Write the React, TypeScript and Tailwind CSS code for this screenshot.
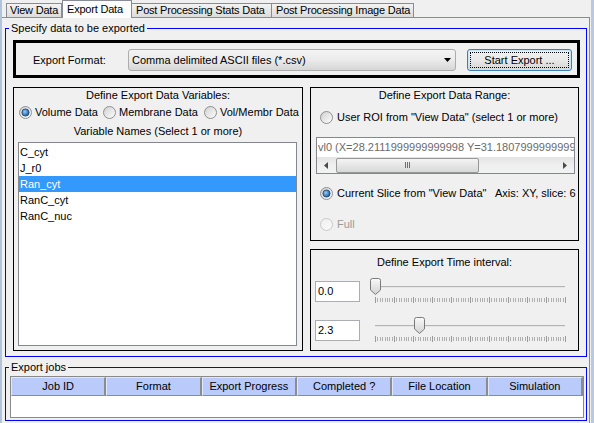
import React, { useId } from "react";

function Radio({ checked = false, disabled = false }: { checked?: boolean; disabled?: boolean }) {
  const id = useId().replace(/:/g, "");
  return (
    <svg width="13" height="13" viewBox="0 0 13 13" className="block shrink-0">
      <defs>
        <linearGradient id={`rf${id}`} x1="0" y1="0" x2="1" y2="1">
          <stop offset="0" stopColor={disabled ? "#eeeeee" : "#cfcfcf"} />
          <stop offset="1" stopColor={disabled ? "#fafafa" : "#ffffff"} />
        </linearGradient>
        <radialGradient id={`rd${id}`} cx="0.4" cy="0.4" r="0.6">
          <stop offset="0" stopColor="#8fd0ff" />
          <stop offset="1" stopColor="#1c5a9c" />
        </radialGradient>
      </defs>
      <circle cx="6.5" cy="6.5" r="6" fill={`url(#rf${id})`} stroke={disabled ? "#c8c8c8" : "#8e8f8f"} />
      {checked && <circle cx="6.5" cy="6.5" r="3.6" fill={`url(#rd${id})`} stroke="#23416a" strokeWidth="0.8" />}
    </svg>
  );
}

function Slider({ thumbX }: { thumbX: number }) {
  const id = useId().replace(/:/g, "");
  const ticks: React.ReactNode[] = [];
  for (let i = 0; i <= 80; i++) {
    const x = Math.round(10 + i * 2.375);
    const major = i % 8 === 0;
    ticks.push(
      <rect key={i} x={x} y={major ? 20 : 21} width={1} height={major ? 6 : 4} fill={major ? "#9a9a9a" : "#b0b0b0"} />
    );
  }
  return (
    <svg width="210" height="28" className="block shrink-0">
      <defs>
        <linearGradient id={`th${id}`} x1="0" y1="0" x2="0" y2="1">
          <stop offset="0" stopColor="#fafafa" />
          <stop offset="1" stopColor="#d2d2d2" />
        </linearGradient>
      </defs>
      <rect x="10" y="9" width="190" height="1" fill="#b4b4b4" />
      <rect x="10" y="10" width="190" height="1" fill="#e6e6e6" />
      {ticks}
      <path
        transform={`translate(${thumbX},1)`}
        d="M0.5,2.5 Q0.5,0.5 2.5,0.5 H8.5 Q10.5,0.5 10.5,2.5 V12 L5.5,16.5 L0.5,12 Z"
        fill={`url(#th${id})`}
        stroke="#7a7a7a"
      />
    </svg>
  );
}

function TitledBox({
  title,
  className,
  children,
}: {
  title: string;
  className: string;
  children?: React.ReactNode;
}) {
  return (
    <div className={`relative border border-[#0000ff] ${className}`}>
      <span className="absolute left-[3px] -top-[8px] px-[2px] bg-[#f0f0f0] leading-[14px] whitespace-nowrap">
        {title}
      </span>
      {children}
    </div>
  );
}

export default function App() {
  const vars = ["C_cyt", "J_r0", "Ran_cyt", "RanC_cyt", "RanC_nuc"];
  const cols = ["Job ID", "Format", "Export Progress", "Completed ?", "File Location", "Simulation"];
  return (
    <div className="w-[594px] h-[423px] bg-[#f0f0f0] flex overflow-hidden font-['Liberation_Sans',Arial,sans-serif] text-[11px] leading-[14px] text-black">
      <div className="w-[2px] bg-[#b3c3da]" />
      <div className="w-[588px] flex flex-col">
        {/* tabs */}
        <div className="h-[17px] flex items-end pl-[4px] shrink-0 tracking-[-0.2px]">
          <div className="w-[56px] h-[14px] border-t border-l border-r border-[#898c95] bg-gradient-to-b from-[#f3f3f3] to-[#dcdcdc] pl-[3px] leading-[13px] whitespace-nowrap">
            View Data
          </div>
          <div className="relative z-10 w-[70px] h-[18px] -mb-[1px] border-t border-l border-r border-[#898c95] bg-[#fcfcfc] pl-[4px] pt-[1px] leading-[14px] whitespace-nowrap">
            Export Data
          </div>
          <div className="w-[140px] h-[14px] border-t border-r border-[#898c95] bg-gradient-to-b from-[#f3f3f3] to-[#dcdcdc] pl-[4px] leading-[13px] whitespace-nowrap overflow-hidden">
            Post Processing Stats Data
          </div>
          <div className="w-[142px] h-[14px] border-t border-r border-[#898c95] bg-gradient-to-b from-[#f3f3f3] to-[#dcdcdc] pl-[4px] leading-[13px] whitespace-nowrap overflow-hidden">
            Post Processing Image Data
          </div>
        </div>
        {/* tab panel */}
        <div className="flex-1 border-t border-r border-[#898c95] pl-[3px] pt-[10px]">
          <TitledBox title="Specify data to be exported" className="w-[582px] h-[329px]">
            {/* export format box */}
            <div className="ml-[7px] mt-[11px] w-[567px] h-[38px] border-[3px] border-black flex items-center pt-[2px]">
              <div className="ml-[17px] w-[95px] whitespace-nowrap">Export Format:</div>
              <div className="w-[328px] h-[22px] rounded-[3px] border border-[#acacac] bg-gradient-to-b from-[#f4f4f4] via-[#ebebeb] to-[#d6d6d6] flex items-center pl-[3px] pr-[4px]">
                <span className="flex-1 whitespace-nowrap">Comma delimited ASCII files (*.csv)</span>
                <svg width="7" height="4" className="block">
                  <path d="M0,0 H7 L3.5,4 Z" fill="#000" />
                </svg>
              </div>
              <div className="ml-[11px] w-[105px] h-[22px] rounded-[3px] border border-[#3c7fb1] bg-gradient-to-b from-[#f2f2f2] via-[#e9e9e9] to-[#d4d4d4] p-[2px] shadow-[inset_0_0_0_1px_#c4e5f6]">
                <div className="w-full h-full border border-dotted border-black flex items-center justify-center whitespace-nowrap">
                  Start Export ...
                </div>
              </div>
            </div>
            {/* main row */}
            <div className="ml-[7px] mt-[9px] flex gap-[7px]">
              {/* left panel */}
              <div className="w-[290px] h-[264px] border border-black flex flex-col">
                <div className="h-[14px] text-center">Define Export Data Variables:</div>
                <div className="mt-[3px] h-[14px] flex items-center pl-[5px] whitespace-nowrap">
                  <div className="w-[84px] flex items-center">
                    <Radio checked />
                    <span className="ml-[3px]">Volume Data</span>
                  </div>
                  <div className="w-[101px] flex items-center">
                    <Radio />
                    <span className="ml-[3px]">Membrane Data</span>
                  </div>
                  <div className="flex items-center">
                    <Radio />
                    <span className="ml-[3px]">Vol/Membr Data</span>
                  </div>
                </div>
                <div className="mt-[5px] h-[14px] text-center">Variable Names (Select 1 or more)</div>
                <div className="mt-[4px] ml-[4px] w-[279px] h-[204px] border border-[#828790] bg-white pt-[1px]">
                  {vars.map((v) => (
                    <div
                      key={v}
                      className={`h-[16px] leading-[16px] pl-[1px] ${v === "Ran_cyt" ? "bg-[#3399ff] text-white" : ""}`}
                    >
                      {v}
                    </div>
                  ))}
                </div>
              </div>
              {/* right column */}
              <div className="w-[269px] flex flex-col gap-[8px]">
                <div className="h-[154px] border border-black flex flex-col">
                  <div className="h-[14px] text-center">Define Export Data Range:</div>
                  <div className="mt-[8px] h-[14px] flex items-center pl-[9px] whitespace-nowrap">
                    <Radio />
                    <span className="ml-[4px]">User ROI from "View Data" (select 1 or more)</span>
                  </div>
                  <div className="mt-[13px] ml-[5px] w-[259px] h-[37px] border border-[#828790] bg-white flex flex-col">
                    <div className="h-[19px] leading-[19px] pl-[1px] whitespace-nowrap overflow-hidden text-[#6a6a6a]">
                      vl0 (X=28.2111999999999998 Y=31.18079999999999
                    </div>
                    <div className="h-[16px] flex bg-gradient-to-b from-[#e3e3e3] via-[#efefef] to-[#f3f3f3]">
                      <div className="w-[17px] flex items-center justify-center">
                        <svg width="4" height="7" className="block">
                          <path d="M4,0 V7 L0,3.5 Z" fill="#4a4a4a" />
                        </svg>
                      </div>
                      <div className="flex-1 flex items-center">
                        <div className="ml-[2px] w-[143px] h-[15px] rounded-[2px] border border-[#979797] bg-gradient-to-b from-[#f4f4f4] to-[#d8d8d8] flex items-center justify-center gap-[1px]">
                          <div className="w-[1px] h-[6px] bg-[#6f6f6f]" />
                          <div className="w-[1px] h-[6px] bg-[#6f6f6f]" />
                          <div className="w-[1px] h-[6px] bg-[#6f6f6f]" />
                        </div>
                      </div>
                      <div className="w-[17px] flex items-center justify-center pr-[2px]">
                        <svg width="4" height="7" className="block">
                          <path d="M0,0 V7 L4,3.5 Z" fill="#4a4a4a" />
                        </svg>
                      </div>
                    </div>
                  </div>
                  <div className="mt-[12px] h-[14px] flex items-center pl-[9px] whitespace-nowrap">
                    <Radio checked />
                    <span className="ml-[4px] w-[158px]">Current Slice from "View Data"</span>
                    <span>Axis: XY, slice: 6</span>
                  </div>
                  <div className="mt-[17px] h-[14px] flex items-center pl-[9px] whitespace-nowrap">
                    <Radio disabled />
                    <span className="ml-[4px] text-[#9a9a9a]">Full</span>
                  </div>
                </div>
                <div className="h-[102px] border border-black flex flex-col">
                  <div className="mt-[5px] h-[14px] text-center">Define Export Time interval:</div>
                  <div className="mt-[8px] h-[28px] flex">
                    <div className="mt-[4px] ml-[4px] w-[45px] h-[21px] border border-[#abadb3] bg-white pl-[2px] leading-[19px]">
                      0.0
                    </div>
                    <div className="ml-[5px]">
                      <Slider thumbX={5} />
                    </div>
                  </div>
                  <div className="mt-[11px] h-[28px] flex">
                    <div className="mt-[4px] ml-[4px] w-[45px] h-[21px] border border-[#abadb3] bg-white pl-[2px] leading-[19px]">
                      2.3
                    </div>
                    <div className="ml-[5px]">
                      <Slider thumbX={49} />
                    </div>
                  </div>
                </div>
              </div>
            </div>
          </TitledBox>
          <TitledBox title="Export jobs" className="mt-[10px] w-[582px] h-[54px]">
            <div className="ml-[4px] mt-[8px] w-[574px] h-[42px] border border-[#8a8a8a] bg-white flex flex-col">
              <div className="h-[19px] flex">
                {cols.map((c) => (
                  <div
                    key={c}
                    className="flex-1 bg-[#bacbfb] border-t border-l border-t-[#dfe6fd] border-l-[#dfe6fd] border-r-2 border-b border-r-[#8c8c8c] border-b-[#8c8c8c] text-center leading-[16px] whitespace-nowrap"
                  >
                    {c}
                  </div>
                ))}
              </div>
            </div>
          </TitledBox>
        </div>
      </div>
      <div className="w-[1px]" />
      <div className="w-[3px] bg-[#b9c9e0]" />
    </div>
  );
}
